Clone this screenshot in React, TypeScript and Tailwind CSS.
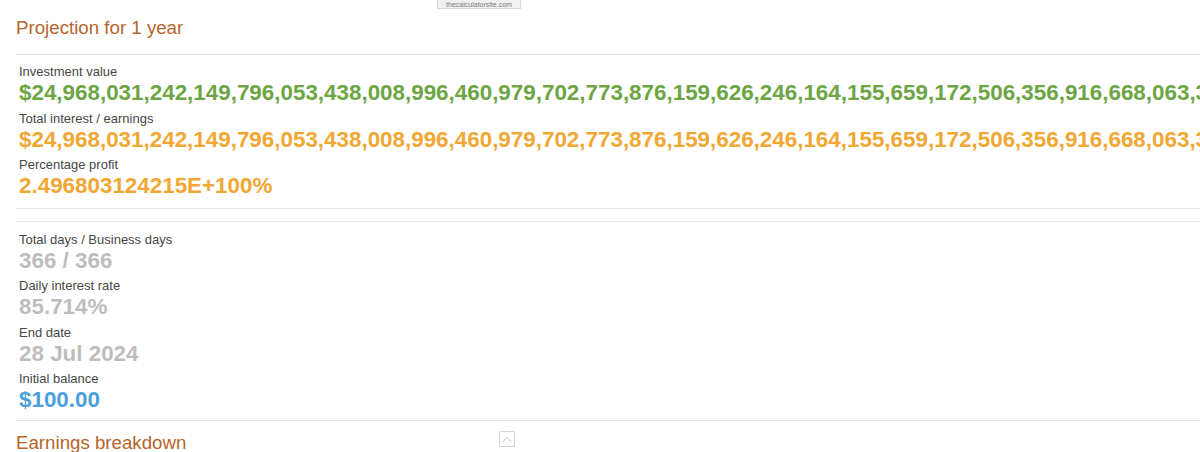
const items1 = [
  {
    label: "Investment value",
    value:
      "$24,968,031,242,149,796,053,438,008,996,460,979,702,773,876,159,626,246,164,155,659,172,506,356,916,668,063,3",
    color: "text-[#6da544]",
  },
  {
    label: "Total interest / earnings",
    value:
      "$24,968,031,242,149,796,053,438,008,996,460,979,702,773,876,159,626,246,164,155,659,172,506,356,916,668,063,3",
    color: "text-[#f0a733]",
  },
  {
    label: "Percentage profit",
    value: "2.496803124215E+100%",
    color: "text-[#f0a733]",
  },
];

const items2 = [
  { label: "Total days / Business days", value: "366 / 366", color: "text-[#bdbdbd]" },
  { label: "Daily interest rate", value: "85.714%", color: "text-[#bdbdbd]" },
  { label: "End date", value: "28 Jul 2024", color: "text-[#bdbdbd]" },
  { label: "Initial balance", value: "$100.00", color: "text-[#4a9fdd]" },
];

const Stat = ({ label, value, color }: { label: string; value: string; color: string }) => (
  <div className="pb-[4.5px]">
    <div className="text-[13px] leading-[16px] text-[#474747]">{label}</div>
    <div className={`whitespace-nowrap text-[22.4px] font-bold leading-[26px] ${color}`}>{value}</div>
  </div>
);

const App = () => {
  return (
    <div
      className="relative h-[452px] w-[1200px] overflow-hidden bg-white"
      style={{ fontFamily: '"Liberation Sans", Arial, sans-serif' }}
    >
      {/* site watermark from the screenshot */}
      <div className="absolute left-[437px] top-[-1px] flex h-[10px] w-[84px] items-center justify-center border border-[#d6d6d6] bg-[#f1f1f1] text-[7px] leading-none text-[#7a7a7a]">
        thecalculatorsite.com
      </div>

      <h2 className="pl-[16px] pt-[16px] text-[18.7px] leading-[24px] text-[#b5652b]">Projection for 1 year</h2>

      <div className="ml-[16px] mt-[14px] border-t border-[#e6e6e6]" />
      <div className="pl-[19px] pt-[9px] pb-[4px]">
        {items1.map((it) => (
          <Stat key={it.label} {...it} />
        ))}
      </div>

      <div className="ml-[16px] border-t border-[#e6e6e6]" />
      <div className="ml-[16px] mt-[12px] border-t border-[#e6e6e6]" />
      <div className="pl-[19px] pt-[10px] pb-[2px]">
        {items2.map((it) => (
          <Stat key={it.label} {...it} />
        ))}
      </div>

      <div className="ml-[16px] border-t border-[#e6e6e6]" />
      <div className="flex items-start pl-[16px] pt-[10px]">
        <h2 className="w-[483px] text-[18.7px] leading-[24px] text-[#b5652b]">Earnings breakdown</h2>
        <button className="mt-[0px] flex h-[16px] w-[16px] items-center justify-center rounded-[1px] border border-[#d4d4d4] bg-white">
          <svg width="10" height="6" viewBox="0 0 10 6" fill="none">
            <path d="M1 5.5 L5 1.5 L9 5.5" stroke="#bdbdbd" strokeWidth="1" />
          </svg>
        </button>
      </div>
    </div>
  );
};

export default App;
